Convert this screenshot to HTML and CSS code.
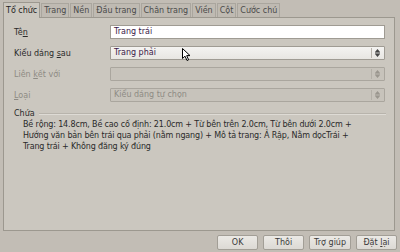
FILE: index.html
```html
<!DOCTYPE html>
<html>
<head>
<meta charset="utf-8">
<link rel="stylesheet" href="styles.css">
</head>
<body>
<div class="dialog">
  <div class="tabs">
    <div class="tab active">Tổ chức</div>
    <div class="tab">Trang</div>
    <div class="tab">Nền</div>
    <div class="tab">Đầu trang</div>
    <div class="tab">Chân trang</div>
    <div class="tab">Viền</div>
    <div class="tab">Cột</div>
    <div class="tab">Cước chú</div>
  </div>
  <div class="panel">
    <div class="form">
      <div class="label">Tê<u>n</u></div>
      <div class="input">Trang trái</div>
      <div class="label">Kiểu dáng <u>s</u>au</div>
      <div class="select">
        <span class="val">Trang phải</span>
        <span class="spin"><svg width="7" height="10" viewBox="0 0 7 10"><path d="M3.5 1 L6 4 L1 4 Z M1 6 L6 6 L3.5 9 Z" fill="#444"/><path d="M1 4.5 H6 M1 5.5 H6" stroke="#444" stroke-width="0.6"/></svg></span>
      </div>
      <div class="label dis">Liên <u>k</u>ết với</div>
      <div class="select disabled">
        <span class="val"></span>
        <span class="spin"><svg width="7" height="10" viewBox="0 0 7 10"><path d="M3.5 1 L6 4 L1 4 Z M1 6 L6 6 L3.5 9 Z" fill="#9a968e"/><path d="M1 4.5 H6 M1 5.5 H6" stroke="#9a968e" stroke-width="0.6"/></svg></span>
      </div>
      <div class="label dis"><u>L</u>oại</div>
      <div class="select disabled">
        <span class="val">Kiểu dáng tự chọn</span>
        <span class="spin"><svg width="7" height="10" viewBox="0 0 7 10"><path d="M3.5 1 L6 4 L1 4 Z M1 6 L6 6 L3.5 9 Z" fill="#9a968e"/><path d="M1 4.5 H6 M1 5.5 H6" stroke="#9a968e" stroke-width="0.6"/></svg></span>
      </div>
    </div>
    <div class="section">
      <span class="sec-title">Chứa</span>
      <span class="sec-line"></span>
    </div>
    <div class="desc">Bề rộng: 14.8cm, Bề cao cố định: 21.0cm + Từ bên trên 2.0cm, Từ bên dưới 2.0cm +<br>Hướng văn bản bên trái qua phải (nằm ngang) + Mô tả trang: Ả Rập, Nằm dọcTrái +<br>Trang trái + Không đăng ký đúng</div>
  </div>
  <div class="buttons">
    <div class="btn">OK</div>
    <div class="btn">Thôi</div>
    <div class="btn">Trợ giúp</div>
    <div class="btn">Đặt <u>l</u>ại</div>
  </div>
  <svg class="cursor" width="10" height="14" viewBox="0 0 10 14"><path d="M0.5 0.5 L0.5 10.5 L3 8.2 L5 12.5 L6.6 11.8 L4.7 7.6 L8 7.6 Z" fill="#fff" stroke="#000" stroke-width="1"/></svg>
</div>
</body>
</html>
```

FILE: styles.css
```css
html, body {
  margin: 0;
  padding: 0;
}
body {
  width: 400px;
  height: 252px;
  overflow: hidden;
  background: #c2bdb5;
  font-family: "DejaVu Sans", sans-serif;
  font-size: 8px;
  color: #2a2a2a;
}
u {
  text-decoration: underline;
  text-underline-offset: 1px;
}
.dialog {
  position: relative;
  width: 400px;
  height: 252px;
}
.tabs {
  display: flex;
  align-items: flex-end;
  height: 17px;
  padding-left: 3px;
  position: relative;
  z-index: 1;
}
.tab {
  height: 14px;
  line-height: 14px;
  padding: 0 2px;
  margin-right: 1px;
  border: 1px solid #aaa69e;
  border-bottom: none;
  background: #bfbab2;
  color: #4a4a4a;
  box-sizing: border-box;
  white-space: nowrap;
}
.tab.active {
  height: 16px;
  line-height: 15px;
  background: #cbc7bf;
  color: #1e1e1e;
  border-color: #9c988f;
  margin-bottom: -1px;
}
.panel {
  margin: 0 5px 0 3px;
  height: 214px;
  box-sizing: border-box;
  border: 1px solid #9c988f;
  background: #cbc7bf;
  padding: 7px 9px 0 10px;
}
.form {
  display: grid;
  grid-template-columns: 96px 1fr;
  row-gap: 7px;
  align-items: center;
}
.label {
  color: #2a2a2a;
  white-space: nowrap;
}
.label.dis {
  color: #8e8b84;
}
.input {
  height: 14px;
  box-sizing: border-box;
  border: 1px solid #9f9b93;
  background: #fff;
  padding-left: 3px;
  line-height: 12px;
  color: #3a1848;
}
.select {
  height: 14px;
  box-sizing: border-box;
  border: 1px solid #9f9b93;
  border-radius: 1px;
  background: linear-gradient(#f4f3f1, #e8e6e2);
  display: flex;
  align-items: center;
  padding-left: 3px;
  color: #3a1848;
}
.select .val {
  flex: 1;
  line-height: 12px;
}
.select .spin {
  width: 11px;
  height: 10px;
  border-left: 1px solid #b8b4ac;
  display: flex;
  justify-content: center;
  align-items: center;
  margin-right: 1px;
}
.select.disabled {
  background: #c7c3bb;
  border-color: #aaa69e;
  color: #8e8b84;
}
.select.disabled .spin {
  border-left-color: #b4b0a8;
}
.section {
  display: flex;
  align-items: center;
  margin-top: 6px;
  height: 11px;
}
.sec-title {
  color: #2a2a2a;
}
.sec-line {
  flex: 1;
  height: 0;
  border-top: 1px solid #b8b4ac;
  border-bottom: 1px solid #dedbd5;
  margin-left: 4px;
  margin-right: -1px;
}
.desc {
  padding-left: 9px;
  line-height: 11px;
  color: #2a2a2a;
  white-space: nowrap;
  letter-spacing: -0.15px;
}
.buttons {
  display: flex;
  justify-content: flex-end;
  gap: 5px;
  padding: 4px 3px 0 0;
}
.btn {
  height: 15px;
  box-sizing: border-box;
  border: 1px solid #a29e96;
  border-radius: 2px;
  background: linear-gradient(#ebe9e5, #dcd9d4);
  text-align: center;
  line-height: 13px;
  color: #3a3a3a;
  min-width: 41px;
  padding: 0 4px;
  white-space: nowrap;
}
.cursor {
  position: absolute;
  left: 182px;
  top: 48px;
}
```
